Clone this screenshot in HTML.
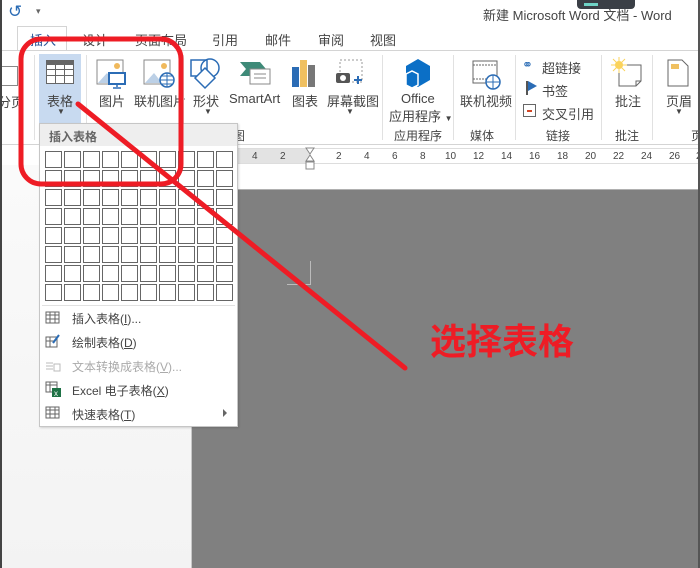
<!DOCTYPE html>
<html><head><meta charset="utf-8"><style>
*{margin:0;padding:0;box-sizing:border-box}
body{width:700px;height:568px;overflow:hidden;position:relative;background:#fff;font-family:"Liberation Sans","Noto Sans CJK SC",sans-serif;color:#444;font-size:12px}
.a{position:absolute}
.t{position:absolute;white-space:nowrap}
.cell{position:absolute;width:17px;height:17px;border:1px solid #666;background:#fff}
.sep{position:absolute;width:1px;background:#e1e1e1}
.rn{position:absolute;top:151px;font-size:10px;color:#444}
</style></head><body>
<div class="t" style="left:8px;top:2px;font-size:17px;color:#2b6cb5">↺</div>
<div class="t" style="left:36px;top:6px;font-size:9px;color:#666">▾</div>
<div class="t" style="left:483px;top:5px;font-size:13px;color:#444">新建 Microsoft Word 文档 - Word</div>
<div class="a" style="left:577px;top:0;width:58px;height:9px;background:#3a3f46;border-radius:0 0 4px 4px"></div>
<div class="a" style="left:584px;top:3px;width:14px;height:3px;background:#6fd3c6"></div>
<div class="a" style="left:17px;top:26px;width:50px;height:25px;border:1px solid #d4d4d4;border-bottom:none;background:#fff"></div>
<div class="a" style="left:0;top:50px;width:700px;height:1px;background:#d4d4d4"></div>
<div class="t" style="left:30px;top:30px;font-size:13px;color:#2b579a">插入</div>
<div class="t" style="left:82px;top:30px;font-size:13px">设计</div>
<div class="t" style="left:135px;top:30px;font-size:13px">页面布局</div>
<div class="t" style="left:212px;top:30px;font-size:13px">引用</div>
<div class="t" style="left:265px;top:30px;font-size:13px">邮件</div>
<div class="t" style="left:318px;top:30px;font-size:13px">审阅</div>
<div class="t" style="left:370px;top:30px;font-size:13px">视图</div>
<div class="a" style="left:0;top:144px;width:700px;height:1px;background:#d4d4d4"></div>
<div class="t" style="left:-2px;top:92px;font-size:13px">分页</div>
<div class="a" style="left:0;top:66px;width:18px;height:20px;border:1px solid #888;border-left:none"></div>
<div class="sep" style="left:34px;top:55px;height:85px"></div>
<div class="a" style="left:39px;top:54px;width:42px;height:69px;background:#c8daf0"></div>
<div class="a" style="left:46px;top:60px;width:28px;height:24px;border:1px solid #666;background:#fff;
background-image:linear-gradient(#666 0 0),linear-gradient(90deg,transparent 8px,#666 8px 9px,transparent 9px 17px,#666 17px 18px,transparent 18px),linear-gradient(transparent 8px,#666 8px 9px,transparent 9px 14px,#666 14px 15px,transparent 15px);background-size:100% 4px,100% 100%,100% 100%;background-repeat:no-repeat"></div>
<div class="t" style="left:47px;top:91px;font-size:13px">表格</div>
<div class="t" style="left:57px;top:107px;font-size:8px">▼</div>
<div class="sep" style="left:86px;top:55px;height:85px"></div>
<svg class="a" style="left:95px;top:58px" width="34" height="32"><rect x="2" y="2" width="26" height="24" fill="#fff" stroke="#888"/><path d="M3 25 L12 15 L20 25Z" fill="#bcd0e6"/><circle cx="22" cy="8" r="3" fill="#f0b95c"/><rect x="14" y="15" width="16" height="11" fill="#fff" stroke="#2b6cb5" stroke-width="2"/><path d="M22 26v3M18 30h8" stroke="#2b6cb5" stroke-width="1.5"/></svg>
<div class="t" style="left:99px;top:91px;font-size:13px">图片</div>
<svg class="a" style="left:142px;top:58px" width="36" height="32"><rect x="2" y="2" width="26" height="24" fill="#fff" stroke="#888"/><path d="M3 25 L12 15 L20 25Z" fill="#bcd0e6"/><circle cx="22" cy="8" r="3" fill="#f0b95c"/><circle cx="25" cy="22" r="7" fill="#fff" stroke="#2b6cb5" stroke-width="1.5"/><path d="M18 22h14M25 15v14M20 18h10M20 26h10" stroke="#2b6cb5"/></svg>
<div class="t" style="left:134px;top:91px;font-size:13px">联机图片</div>
<div class="sep" style="left:183px;top:55px;height:85px"></div>
<svg class="a" style="left:189px;top:56px" width="34" height="34"><rect x="2" y="4" width="16" height="16" fill="#fff" stroke="#2b6cb5" stroke-width="1.5"/><circle cx="21" cy="12" r="9" fill="none" stroke="#2b6cb5" stroke-width="1.5"/><path d="M16 12 L26 22 L16 32 L6 22Z" fill="#fff" stroke="#2b6cb5" stroke-width="1.5"/></svg>
<div class="t" style="left:193px;top:91px;font-size:13px">形状</div>
<div class="t" style="left:204px;top:107px;font-size:8px">▼</div>
<svg class="a" style="left:238px;top:60px" width="34" height="28"><path d="M2 2h20l6 7-6 7H2l6-7z" fill="#3e8a78"/><rect x="12" y="9" width="20" height="15" fill="#fff" stroke="#888"/><path d="M16 14h12M16 18h12" stroke="#888"/></svg>
<div class="t" style="left:229px;top:91px;font-size:13px">SmartArt</div>
<svg class="a" style="left:291px;top:59px" width="26" height="28"><rect x="1" y="8" width="7" height="20" fill="#2b6cb5"/><rect x="9" y="1" width="7" height="27" fill="#f0c060"/><rect x="17" y="6" width="7" height="22" fill="#777"/></svg>
<div class="t" style="left:292px;top:91px;font-size:13px">图表</div>
<svg class="a" style="left:334px;top:59px" width="30" height="30"><rect x="6" y="1" width="22" height="22" fill="none" stroke="#999" stroke-dasharray="2 2"/><rect x="2" y="14" width="14" height="10" rx="2" fill="#555"/><circle cx="9" cy="19" r="3" fill="#fff"/><path d="M20 21h8M24 17v8" stroke="#2b6cb5" stroke-width="2"/></svg>
<div class="t" style="left:327px;top:91px;font-size:13px">屏幕截图</div>
<div class="t" style="left:346px;top:107px;font-size:8px">▼</div>
<div class="sep" style="left:382px;top:55px;height:85px"></div>
<svg class="a" style="left:402px;top:58px" width="30" height="30"><path d="M16 1 L28 8 V22 L16 29 L4 22 V8Z" fill="#0b6fc6"/><path d="M4 16 L10 13 L16 16 V27 L10 30 L4 27Z" fill="#0b6fc6" stroke="#fff" stroke-width="1.5"/></svg>
<div class="t" style="left:401px;top:91px;font-size:13px">Office</div>
<div class="t" style="left:389px;top:106px;font-size:13px">应用程序 <span style="font-size:8px">▼</span></div>
<div class="t" style="left:394px;top:127px;font-size:12px">应用程序</div>
<div class="sep" style="left:453px;top:55px;height:85px"></div>
<svg class="a" style="left:471px;top:60px" width="30" height="30"><rect x="2" y="1" width="24" height="22" fill="#fff" stroke="#666"/><path d="M2 5h24M2 19h24" stroke="#666" stroke-dasharray="2 1"/><circle cx="22" cy="22" r="7" fill="#fff" stroke="#2b6cb5" stroke-width="1.5"/><path d="M15 22h14M22 15v14" stroke="#2b6cb5"/></svg>
<div class="t" style="left:460px;top:91px;font-size:13px">联机视频</div>
<div class="t" style="left:470px;top:127px;font-size:12px">媒体</div>
<div class="sep" style="left:515px;top:55px;height:85px"></div>
<div class="t" style="left:522px;top:57px;font-size:13px;color:#2b6cb5">⚭</div>
<div class="t" style="left:542px;top:58px;font-size:13px">超链接</div>
<div class="a" style="left:526px;top:81px;width:2px;height:14px;background:#555"></div>
<div class="a" style="left:528px;top:81px;width:0;height:0;border-left:9px solid #2b6cb5;border-top:5px solid transparent;border-bottom:5px solid transparent"></div>
<div class="t" style="left:542px;top:81px;font-size:13px">书签</div>
<div class="a" style="left:523px;top:104px;width:13px;height:13px;border:1px solid #666"></div>
<div class="a" style="left:527px;top:110px;width:5px;height:2px;background:#d24726"></div>
<div class="t" style="left:542px;top:104px;font-size:13px">交叉引用</div>
<div class="t" style="left:546px;top:127px;font-size:12px">链接</div>
<div class="sep" style="left:601px;top:55px;height:85px"></div>
<svg class="a" style="left:611px;top:57px" width="34" height="30"><path d="M8 8h22v16l-5 5H8z" fill="#fff" stroke="#666"/><path d="M25 29v-5h5" fill="none" stroke="#666"/><circle cx="8" cy="8" r="4" fill="#fbd35b"/><path d="M8 0v16M0 8h16M2 2l12 12M14 2L2 14" stroke="#fbd35b" stroke-width="1"/></svg>
<div class="t" style="left:615px;top:91px;font-size:13px">批注</div>
<div class="t" style="left:615px;top:127px;font-size:12px">批注</div>
<div class="sep" style="left:652px;top:55px;height:85px"></div>
<svg class="a" style="left:666px;top:58px" width="24" height="30"><path d="M2 2h14l6 6v20H2z" fill="#fff" stroke="#666"/><rect x="5" y="6" width="8" height="5" fill="#f0c060"/></svg>
<div class="t" style="left:666px;top:91px;font-size:13px">页眉</div>
<div class="t" style="left:675px;top:107px;font-size:8px">▼</div>
<div class="t" style="left:691px;top:127px;font-size:12px">页</div>
<div class="t" style="left:233px;top:127px;font-size:12px">图</div>
<div class="a" style="left:178px;top:148px;width:522px;height:16px;background:#fff;border-top:1px solid #ddd;border-bottom:1px solid #ddd"></div>
<div class="a" style="left:178px;top:149px;width:132px;height:14px;background:#e3e3e3"></div>
<div class="rn" style="left:252px">4</div><div class="rn" style="left:280px">2</div>
<div class="rn" style="left:336px">2</div><div class="rn" style="left:364px">4</div><div class="rn" style="left:392px">6</div><div class="rn" style="left:420px">8</div><div class="rn" style="left:445px">10</div><div class="rn" style="left:473px">12</div><div class="rn" style="left:501px">14</div><div class="rn" style="left:529px">16</div><div class="rn" style="left:557px">18</div><div class="rn" style="left:585px">20</div><div class="rn" style="left:613px">22</div><div class="rn" style="left:641px">24</div><div class="rn" style="left:669px">26</div><div class="rn" style="left:696px">2</div>
<svg class="a" style="left:305px;top:147px" width="11" height="25"><path d="M1 1h8L5 7z M1 14L5 8l4 6z" fill="#fff" stroke="#888"/><rect x="1" y="15" width="8" height="7" fill="#fff" stroke="#888"/></svg>
<div class="a" style="left:0;top:165px;width:191px;height:403px;background:linear-gradient(#fafafa,#f3f3f3)"></div>
<div class="a" style="left:0;top:0;width:2px;height:568px;background:#444"></div>
<div class="a" style="left:191px;top:165px;width:1px;height:403px;background:#c8c8c8"></div>
<div class="a" style="left:192px;top:190px;width:508px;height:378px;background:#808080"></div>
<div class="a" style="left:192px;top:189px;width:508px;height:1px;background:#b0b0b0"></div>
<div class="a" style="left:698px;top:0;width:2px;height:568px;background:#555"></div>
<div class="a" style="left:287px;top:261px;width:24px;height:24px;border-right:1px solid #bbb;border-bottom:1px solid #bbb"></div>
<div class="a" style="left:39px;top:123px;width:199px;height:304px;background:#fff;border:1px solid #c6c6c6;box-shadow:1px 1px 2px rgba(0,0,0,.15)"></div>
<div class="a" style="left:40px;top:124px;width:197px;height:22px;background:#eee"></div>
<div class="t" style="left:49px;top:128px;font-size:12px;font-weight:bold;color:#666">插入表格</div>
<div id="g"></div>
<div class="a" style="left:42px;top:305px;width:193px;height:1px;background:#e1e1e1"></div>
<svg class="a" style="left:45px;top:311px" width="16" height="14"><rect x="1" y="1" width="13" height="11" fill="none" stroke="#666"/><path d="M1 4h13M1 8h13M5 1v11M10 1v11" stroke="#666"/></svg>
<div class="t" style="left:72px;top:310px;font-size:12px">插入表格(<u>I</u>)...</div>
<svg class="a" style="left:45px;top:334px" width="16" height="14"><rect x="1" y="3" width="11" height="10" fill="none" stroke="#666"/><path d="M1 7h8M5 3v10" stroke="#666"/><path d="M8 9l6-8" stroke="#2b6cb5" stroke-width="2"/></svg>
<div class="t" style="left:72px;top:334px;font-size:12px">绘制表格(<u>D</u>)</div>
<svg class="a" style="left:45px;top:358px" width="16" height="14"><path d="M1 5h7M1 8h7M1 11h7" stroke="#bbb"/><rect x="9" y="6" width="6" height="7" fill="none" stroke="#bbb"/></svg>
<div class="t" style="left:72px;top:358px;font-size:12px;color:#aaa">文本转换成表格(<u>V</u>)...</div>
<svg class="a" style="left:45px;top:381px" width="16" height="16"><rect x="1" y="1" width="11" height="10" fill="none" stroke="#666"/><path d="M1 4h11M5 1v10" stroke="#666"/><rect x="7" y="7" width="9" height="9" fill="#1e7145"/><text x="9" y="15" font-size="8" fill="#fff" font-family="Liberation Sans">x</text></svg>
<div class="t" style="left:72px;top:382px;font-size:12px">Excel 电子表格(<u>X</u>)</div>
<svg class="a" style="left:45px;top:406px" width="16" height="14"><rect x="1" y="1" width="13" height="11" fill="none" stroke="#666"/><path d="M1 4h13M1 8h13M5 1v11M10 1v11" stroke="#666"/></svg>
<div class="t" style="left:72px;top:406px;font-size:12px">快速表格(<u>T</u>)</div>
<div class="a" style="left:223px;top:409px;width:0;height:0;border-left:4px solid #666;border-top:4px solid transparent;border-bottom:4px solid transparent"></div>
<svg class="a" style="left:0;top:0" width="700" height="568"><rect x="21" y="39" width="160" height="145" rx="20" fill="none" stroke="#ee1c25" stroke-width="5"/><path d="M78 104 L405 368" stroke="#ee1c25" stroke-width="5" stroke-linecap="round"/></svg>
<div class="t" style="left:430px;top:313px;font-size:36px;font-weight:bold;color:#ee1c25;font-family:'Noto Sans CJK SC',sans-serif">选择表格</div>
<script>
var h='';for(var r=0;r<8;r++)for(var c=0;c<10;c++)h+='<div class="cell" style="left:'+(45+c*19)+'px;top:'+(151+r*19)+'px"></div>';
document.getElementById('g').outerHTML=h;
</script>
</body></html>
